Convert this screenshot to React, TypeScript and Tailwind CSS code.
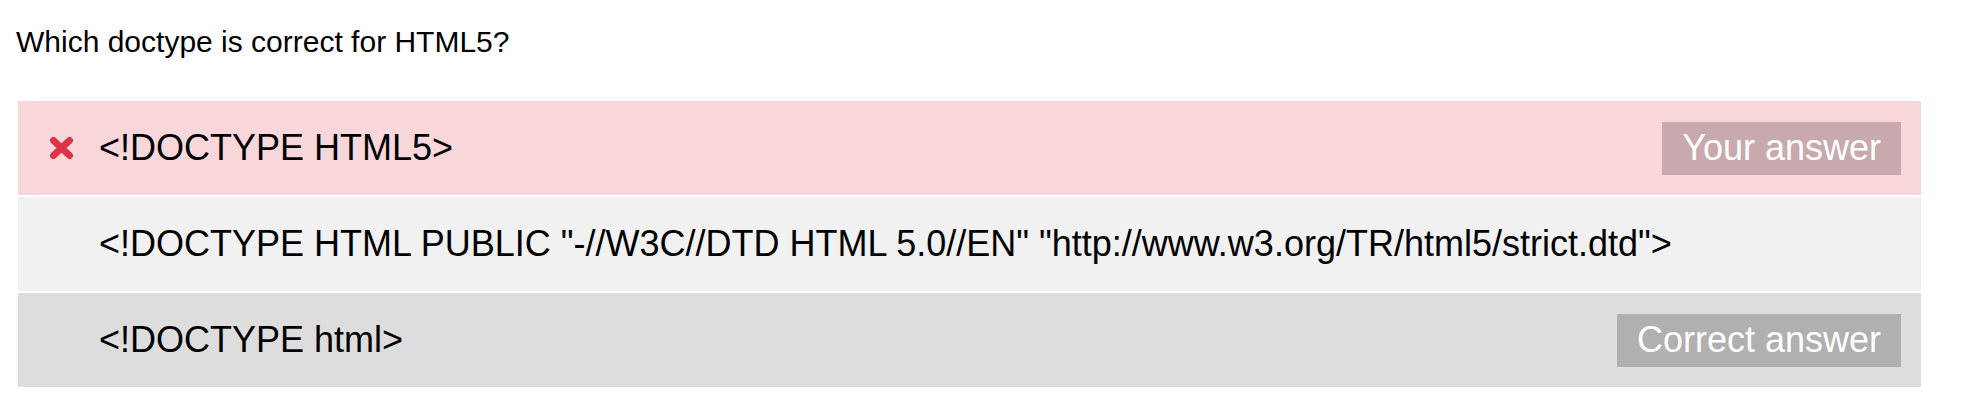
const options = [
  { text: "<!DOCTYPE HTML5>", tone: "wrong", badge: "Your answer" },
  {
    text: '<!DOCTYPE HTML PUBLIC "-//W3C//DTD HTML 5.0//EN" "http://www.w3.org/TR/html5/strict.dtd">',
    tone: "plain",
    badge: null,
  },
  { text: "<!DOCTYPE html>", tone: "correct", badge: "Correct answer" },
] as const;

function Cross() {
  return (
    <svg width="25" height="24" viewBox="0 0 25 24" className="shrink-0">
      <path
        d="M4.5 4.5 L20.5 19.5 M20.5 4.5 L4.5 19.5"
        stroke="#dc3545"
        strokeWidth="7"
        strokeLinecap="round"
        fill="none"
      />
    </svg>
  );
}

export default function App() {
  return (
    <div className="min-h-[408px] bg-white text-black font-['Liberation_Sans',Arial,sans-serif]">
      <p className="pl-[16px] pt-[25px] text-[30px] leading-[34px]">
        Which doctype is correct for HTML5?
      </p>
      <div className="ml-[18px] mt-[42px] flex w-[1903px] flex-col gap-[2px]">
        {options.map((o) => (
          <div
            key={o.text}
            className={
              "flex h-[94px] items-center pr-[20px] " +
              (o.tone === "wrong"
                ? "bg-[#f8d7da]"
                : o.tone === "plain"
                  ? "bg-[#f1f1f1]"
                  : "bg-[#dddddd]")
            }
          >
            <div className="flex w-[81px] shrink-0 justify-start pl-[31px]">
              {o.tone === "wrong" && <Cross />}
            </div>
            <span className="text-[36px] leading-[42px]">{o.text}</span>
            {o.badge && (
              <span
                className={
                  "ml-auto flex h-[53px] items-center px-[20px] text-[36px] leading-[42px] text-white " +
                  (o.tone === "wrong" ? "bg-[#c8aaae]" : "bg-[#b0b0b0]")
                }
              >
                {o.badge}
              </span>
            )}
          </div>
        ))}
      </div>
    </div>
  );
}
